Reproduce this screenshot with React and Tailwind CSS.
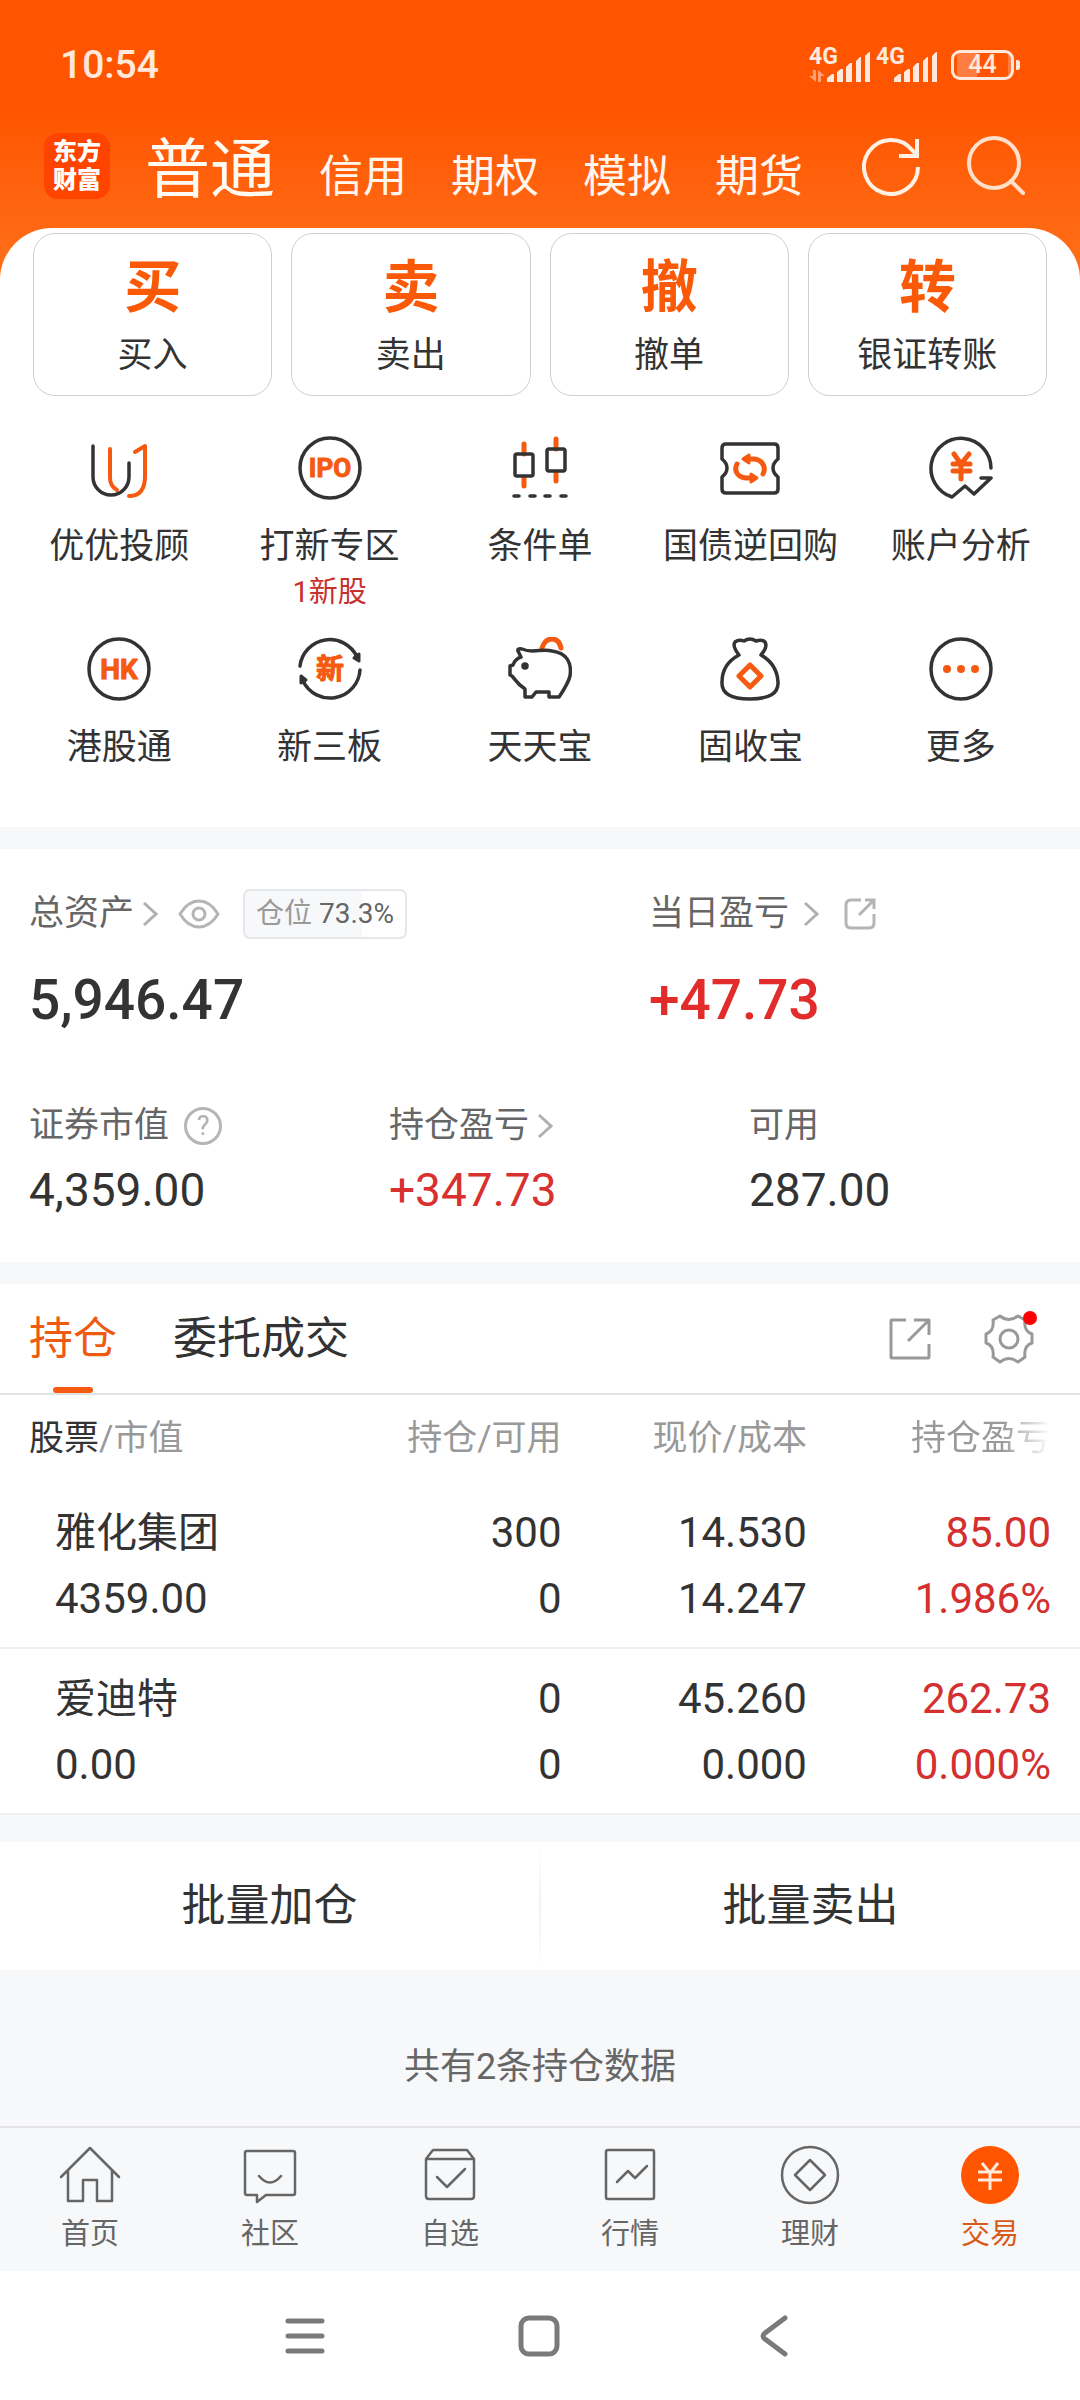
import React from "react";

const DARK = "#333333";
const ORANGE = "#f55a10";

function Glyph({ children, size = 64, box = 64, color = DARK, sw = 3.5, className = "" }) {
  return (
    <svg
      width={size}
      height={size}
      viewBox={`0 0 ${box} ${box}`}
      fill="none"
      stroke={color}
      strokeWidth={sw}
      strokeLinecap="round"
      strokeLinejoin="round"
      className={className}
      aria-hidden="true"
    >
      {children}
    </svg>
  );
}

function Signal({ arrows }) {
  return (
    <span className="flex h-[34px] w-[63px] items-end text-[#ffe9dc]">
      <span className="flex h-full w-[17px] flex-col justify-between">
        <span className="text-[23px] leading-[18px] font-bold">4G</span>
        {arrows && (
          <svg width="16" height="12" viewBox="0 0 16 12" fill="#ffa173" aria-hidden="true">
            <path d="M4 0h3v12L0 6h4zM9 12V0l7 6h-4v6z" />
          </svg>
        )}
      </span>
      <svg width="45" height="30" viewBox="0 0 45 30" fill="currentColor" aria-hidden="true">
        <path d="M1 26l5-4h2v8H1zM11 20l4-3h2v13h-6zM20 15l4-4h2v19h-6zM30 9l4-4h1v25h-5zM39 4l4-4h1v30h-5z" />
      </svg>
    </span>
  );
}

function StatusBar() {
  return (
    <div className="flex h-[130px] items-center justify-between px-[60px] text-[#ffe9dc]">
      <span className="text-[39px] font-medium">10:54</span>
      <div className="flex items-center gap-[4px]">
        <Signal arrows />
        <Signal />
        <span className="ml-[8px] flex items-center gap-[2px]">
          <span className="flex h-[30px] w-[63px] items-center justify-center rounded-[9px] border-[3px] border-current bg-linear-to-r from-[#ff7d40] from-40% to-transparent to-40% bg-origin-content p-[3px] text-[25px] leading-[24px] font-medium">
            44
          </span>
          <span className="h-[10px] w-[4px] rounded-r-[3px] bg-current" />
        </span>
      </div>
    </div>
  );
}

const accounts = ["信用", "期权", "模拟", "期货"];

function Header() {
  return (
    <header className="bg-linear-to-b from-[#ff5500] from-40% to-[#ff7019] pb-[52px]">
      <StatusBar />
      <div className="flex h-[98px] items-start pr-[54px] pl-[44px]">
        <div className="mt-[3px] flex h-[66px] w-[66px] items-center justify-center rounded-[14px] bg-[#ff4400] text-center text-[24px] leading-[28px] font-black text-white">
          <span className="w-[48px]">东方财富</span>
        </div>
        <nav className="ml-[35px] flex flex-1 items-baseline gap-[44px] text-[44px] leading-[80px] text-[#fff6ee]">
          <button className="text-[65px] text-[#fffaf2]">普通</button>
          {accounts.map((a) => (
            <button key={a}>{a}</button>
          ))}
        </nav>
        <button aria-label="刷新" className="mt-[6px]">
          <Glyph size={60} box={60} color="#fff1e4" sw={4}>
            <path d="M56 31A27 27 0 1 1 50 14L56 20" strokeLinecap="butt" />
            <path d="M55 3v17H37" strokeLinecap="butt" strokeLinejoin="miter" />
          </Glyph>
        </button>
        <button aria-label="搜索" className="mt-[4px] ml-[42px]">
          <Glyph size={62} box={62} color="#ffe0cb" sw={4}>
            <circle cx="30" cy="29" r="25" />
            <path d="M47 47l12 12" />
          </Glyph>
        </button>
      </div>
    </header>
  );
}

const actions = [
  ["买", "买入"],
  ["卖", "卖出"],
  ["撤", "撤单"],
  ["转", "银证转账"],
];

const iconText = { fill: ORANGE, stroke: ORANGE, textAnchor: "middle", fontWeight: 700 };

const icons = {
  advisor: (
    <>
      <path d="M6 10v31a18 18 0 0 0 36 0V27" />
      <g stroke={ORANGE} strokeWidth="4">
        <path d="M23 13v29q0 8 7 12" />
        <path d="M48 16l10-6v30q0 20-16 20" />
      </g>
    </>
  ),
  ipo: (
    <>
      <circle cx="32" cy="32" r="30" />
      <text x="32" y="41" fontSize="26" strokeWidth="1" {...iconText}>IPO</text>
    </>
  ),
  condition: (
    <>
      <path d="M16 8v10M16 42v8M48 3v10M48 37v8" stroke={ORANGE} strokeWidth="5" />
      <rect x="7" y="18" width="18" height="22" rx="2" />
      <rect x="39" y="13" width="18" height="22" rx="2" />
      <path d="M6 60h5M22 60h5M37 60h5M53 60h5" />
    </>
  ),
  repo: (
    <>
      <path d="M8 8h48q4 0 4 4v11q-5 4-5 9t5 9v12q0 4-4 4H8q-4 0-4-4V41q5-4 5-9t-5-9V12q0-4 4-4z" />
      <g stroke={ORANGE} strokeWidth="5">
        <path d="M19 28c-4 8 2 14 10 14h5M45 38c4-8-2-15-10-15h-5" />
        <path d="M31 19l-6 4 6 4zM33 38l6 4-6 4z" fill={ORANGE} strokeWidth="3" />
      </g>
    </>
  ),
  analysis: (
    <>
      <path d="M62 32A30 30 0 1 0 23 61L36 50l9 8 17-16H52" />
      <path d="M25 18l7 10 8-10M24 28h17M24 35h17M32 28v15" stroke={ORANGE} strokeWidth="5" />
    </>
  ),
  hk: (
    <>
      <circle cx="32" cy="32" r="30" />
      <text x="32" y="42" fontSize="28" strokeWidth="1" {...iconText}>HK</text>
    </>
  ),
  neeq: (
    <>
      <path d="M2 29A30 30 0 0 1 59 20M62 33A30 30 0 0 1 5 44" />
      <path d="M61 17v7l-5-3zM3 46v-7l5 4z" fill={DARK} strokeWidth="3" />
      <text x="32" y="42" fontSize="28" strokeWidth="1" {...iconText}>新</text>
    </>
  ),
  pig: (
    <>
      <path d="M34 11q3-9 10-9t9 9" stroke={ORANGE} strokeWidth="5" />
      <path d="M10 14q-1-3 4-2 5 2 10 2c8 0 13-2 20 0 15 2 20 12 18 25-2 8-7 15-11 21H41v-5H28l-4 5H17V52C9 47 7 42 4 39L2 38V29l3-1q2-6 8-8z" />
      <circle cx="17" cy="29" r="2" fill={DARK} />
    </>
  ),
  bag: (
    <>
      <path d="M21 18q-7-9-4-13 4-3 9-1 6-4 12 0 6-2 9 1 3 5-4 13 16 9 17 27 1 17-28 17T4 45q0-18 17-27z" />
      <path d="M32 28l11 11-11 11-11-11z" stroke={ORANGE} strokeWidth="5" />
    </>
  ),
  more: (
    <>
      <circle cx="32" cy="32" r="30" />
      <g fill={ORANGE} stroke="none">
        <circle cx="18" cy="32" r="4" />
        <circle cx="32" cy="32" r="4" />
        <circle cx="46" cy="32" r="4" />
      </g>
    </>
  ),
};

const shortcuts = [
  ["advisor", "优优投顾"],
  ["ipo", "打新专区", "1新股"],
  ["condition", "条件单"],
  ["repo", "国债逆回购"],
  ["analysis", "账户分析"],
  ["hk", "港股通"],
  ["neeq", "新三板"],
  ["pig", "天天宝"],
  ["bag", "固收宝"],
  ["more", "更多"],
];

function Shortcuts() {
  return (
    <section className="-mt-[52px] rounded-t-[52px] bg-white pt-[5px]">
      <div className="grid grid-cols-4 gap-[19px] px-[33px]">
        {actions.map(([mark, label]) => (
          <button
            key={label}
            className="flex h-[163px] flex-col items-center rounded-[22px] border border-[#cfcfcf] pt-[24px]"
          >
            <span className="text-[57px] leading-[60px] font-bold text-[#fa5a08]">{mark}</span>
            <span className="mt-[14px] text-[35px] leading-[48px]">{label}</span>
          </button>
        ))}
      </div>
      <div className="grid grid-cols-5 gap-y-[11px] px-[14px] pt-[40px]">
        {shortcuts.map(([icon, label, note]) => (
          <button key={label} className="flex h-[190px] flex-col items-center whitespace-nowrap">
            <Glyph>{icons[icon]}</Glyph>
            <span className="mt-[22px] text-[35px] leading-[50px]">{label}</span>
            {note && <span className="text-[29px] leading-[40px] text-[#c8302e]">{note}</span>}
          </button>
        ))}
      </div>
    </section>
  );
}

function Chevron() {
  return (
    <svg width="16" height="26" viewBox="0 0 16 26" fill="none" stroke="#b0b0b0" strokeWidth="3" aria-hidden="true">
      <path d="M2 2l12 11L2 24" />
    </svg>
  );
}

function Summary() {
  return (
    <section className="bg-white px-[29px] text-[35px] leading-[50px] text-[#666]">
      <div className="grid grid-cols-[620fr_402fr] pt-[40px]">
        <div>
          <div className="flex items-center">
            <button className="flex items-center gap-[8px]">总资产<Chevron /></button>
            <button aria-label="显示或隐藏金额" className="ml-[20px]">
              <svg width="42" height="30" viewBox="0 0 42 30" fill="none" stroke="#b5b5b5" strokeWidth="3" strokeLinejoin="round" aria-hidden="true">
                <path d="M2 15Q10 2 21 2t19 13Q32 28 21 28T2 15z" />
                <circle cx="21" cy="15" r="6" />
              </svg>
            </button>
            <span className="ml-[23px] rounded-[7px] border-2 border-[#e6e7ea] bg-linear-to-r from-[#f7f8fa] from-73% to-white to-73% px-[11px] text-[28px] leading-[46px] text-[#999]">
              仓位 <span className="text-[#666]">73.3%</span>
            </span>
          </div>
          <div className="mt-[26px] text-[55px] leading-[70px] font-medium text-[#333]">5,946.47</div>
        </div>
        <div>
          <div className="flex items-center">
            <button className="flex items-center gap-[14px]">当日盈亏<Chevron /></button>
            <button aria-label="分享盈亏" className="ml-[25px]">
              <svg width="32" height="32" viewBox="0 0 32 32" fill="none" stroke="#b5b5b5" strokeWidth="3" aria-hidden="true">
                <path d="M17 2H7Q2 2 2 7v18q0 5 5 5h18q5 0 5-5V16M21 2h9v9M30 2L15 17" />
              </svg>
            </button>
          </div>
          <div className="mt-[26px] text-[55px] leading-[70px] font-medium text-[#e22b2b]">+47.73</div>
        </div>
      </div>
      <div className="grid grid-cols-[360fr_360fr_302fr] pt-[66px] pb-[42px]">
        <div>
          <div className="flex items-center gap-[15px]">
            证券市值
            <button aria-label="说明" className="flex h-[38px] w-[38px] items-center justify-center rounded-full border-[3px] border-[#b5b5b5] text-[27px] leading-[28px] text-[#b0b0b0]">?</button>
          </div>
          <div className="mt-[9px] text-[46px] leading-[60px] text-[#333]">4,359.00</div>
        </div>
        <div>
          <button className="flex items-center gap-[8px]">持仓盈亏<Chevron /></button>
          <div className="mt-[9px] text-[46px] leading-[60px] text-[#d93030]">+347.73</div>
        </div>
        <div>
          <div>可用</div>
          <div className="mt-[9px] text-[46px] leading-[60px] text-[#333]">287.00</div>
        </div>
      </div>
    </section>
  );
}

const holdings = [
  { name: "雅化集团", value: "4359.00", qty: "300", free: "0", price: "14.530", cost: "14.247", gain: "85.00", rate: "1.986%" },
  { name: "爱迪特", value: "0.00", qty: "0", free: "0", price: "45.260", cost: "0.000", gain: "262.73", rate: "0.000%" },
];

function Holdings() {
  return (
    <section className="bg-white">
      <div className="flex h-[111px] items-stretch border-b-2 border-[#e3e3e3] pr-[46px] pl-[29px] text-[44px]">
        <div role="tablist" className="flex flex-1 gap-[56px]">
          <button role="tab" aria-selected="true" className="relative text-[#ee5a10]">
            持仓
            <span className="absolute bottom-0 left-1/2 h-[6px] w-[40px] -translate-x-1/2 rounded-[3px] bg-[#f55a10]" />
          </button>
          <button role="tab" aria-selected="false">委托成交</button>
        </div>
        <button aria-label="分享持仓">
          <Glyph size={44} box={44} color="#999999" sw={3}>
            <path d="M18 3H4q-1 0-1 1v36q0 1 1 1h36q1 0 1-1V27M26 3h15v15M41 3L20 24" strokeLinecap="butt" />
          </Glyph>
        </button>
        <button aria-label="设置" className="relative ml-[52px]">
          <Glyph size={50} box={50} color="#999999" sw={3}>
            <path d="M9 6l7-4q9 7 18 0l7 4C40 13 42 18 48 20v9C42 31 40 36 41 43l-7 5q-9-7-18 0l-7-5C10 36 8 31 2 29V20C8 18 10 13 9 6z" />
            <circle cx="25" cy="25" r="9" />
          </Glyph>
          <span className="absolute top-[27px] -right-[3px] h-[14px] w-[14px] rounded-full bg-[#ff0000]" />
        </button>
      </div>
      <table className="w-full table-fixed text-right text-[42px] leading-[66px]">
        <colgroup>
          <col className="w-[30%]" />
          <col className="w-[22%]" />
          <col className="w-[23%]" />
          <col className="w-[25%]" />
        </colgroup>
        <thead className="text-[35px] leading-[88px] text-[#999]">
          <tr>
            <th className="pl-[29px] text-left font-normal"><span className="text-[#333]">股票</span>/市值</th>
            <th className="font-normal">持仓/可用</th>
            <th className="pr-[3px] font-normal">现价/成本</th>
            <th className="pr-[29px] font-normal">
              <span className="bg-linear-to-r from-[#999] from-65% to-transparent bg-clip-text text-transparent">持仓盈亏</span>
            </th>
          </tr>
        </thead>
        <tbody>
          {holdings.map((h) => (
            <tr key={h.name} className="border-b-2 border-[#f0f0f2]">
              <td className="pt-[17px] pb-[15px] pl-[55px] text-left">
                <div className="text-[41px]">{h.name}</div>
                <div>{h.value}</div>
              </td>
              <td className="pt-[17px] pb-[15px]"><div>{h.qty}</div><div>{h.free}</div></td>
              <td className="pt-[17px] pr-[3px] pb-[15px]"><div>{h.price}</div><div>{h.cost}</div></td>
              <td className="pt-[17px] pr-[29px] pb-[15px] text-[#d3302f]"><div>{h.gain}</div><div>{h.rate}</div></td>
            </tr>
          ))}
        </tbody>
      </table>
    </section>
  );
}

const tabs = [
  ["首页", <><path d="M2 32L31 3l29 29M9 26v30h15V35h14v21h15V26" /></>],
  ["社区", <><path d="M8 6h46q2 0 2 2v40q0 2-2 2H27l-9 7v-7H8q-2 0-2-2V8q0-2 2-2zM20 31q11 13 22 0" /></>],
  ["自选", <><path d="M7 14v37q0 3 3 3h42q3 0 3-3V14l-7-9H14zM7 14h48M18 32l10 10 18-18" /></>],
  ["行情", <><path d="M9 5h44q2 0 2 2v45q0 2-2 2H9q-2 0-2-2V7q0-2 2-2zM18 37l11-11 7 7 12-12" /></>],
  ["理财", <><circle cx="31" cy="30" r="28" /><path d="M31 15l15 15-15 15-15-15z" /></>],
];

function TabBar() {
  return (
    <nav className="grid h-[145px] grid-cols-6 border-t-2 border-[#e4e4e6] bg-[#f7f8fa] pt-[17px] text-[29px] leading-[40px] text-[#666]">
      {tabs.map(([label, art]) => (
        <button key={label} className="flex flex-col items-center">
          <Glyph size={62} box={62} color="#666666" sw={2.5}>{art}</Glyph>
          <span className="mt-[7px]">{label}</span>
        </button>
      ))}
      <button aria-current="page" className="flex flex-col items-center text-[#d95a18]">
        <Glyph size={62} box={62} color="#ffeadb" sw={3}>
          <circle cx="31" cy="30" r="29" fill="#ff5500" stroke="none" />
          <path d="M23 18l8 10 8-10M19 27h24M19 35h24M31 28v17" strokeLinecap="butt" />
        </Glyph>
        <span className="mt-[7px]">交易</span>
      </button>
    </nav>
  );
}

function SystemBar() {
  return (
    <div className="flex h-[130px] items-center justify-center gap-[190px] bg-white pr-[3px]">
      <button aria-label="最近任务">
        <Glyph size={44} box={44} color="#7a7a7a" sw={5}><path d="M5 7h34M5 22h34M5 37h34" /></Glyph>
      </button>
      <button aria-label="主屏幕">
        <Glyph size={44} box={44} color="#7a7a7a" sw={5}><rect x="4" y="4" width="36" height="36" rx="8" /></Glyph>
      </button>
      <button aria-label="返回">
        <Glyph size={44} box={44} color="#7a7a7a" sw={5}><path d="M34 4L14 19q-4 3 0 6l20 15" /></Glyph>
      </button>
    </div>
  );
}

export default function App() {
  return (
    <div className="min-h-screen bg-[#f7f8fa] font-[Roboto,'Noto_Sans_CJK_SC',sans-serif] text-[#333]">
      <Header />
      <Shortcuts />
      <div className="mt-[22px]"><Summary /></div>
      <div className="mt-[22px]"><Holdings /></div>
      <div className="mt-[27px] grid grid-cols-[1fr_2px_1fr] bg-white text-[44px] leading-[128px]">
        <button>批量加仓</button>
        <span className="bg-linear-to-b from-white via-[#f1f1f3] to-white" />
        <button>批量卖出</button>
      </div>
      <p className="pt-[73px] pb-[35px] text-center text-[36px] leading-[48px] text-[#666]">共有2条持仓数据</p>
      <TabBar />
      <SystemBar />
    </div>
  );
}
